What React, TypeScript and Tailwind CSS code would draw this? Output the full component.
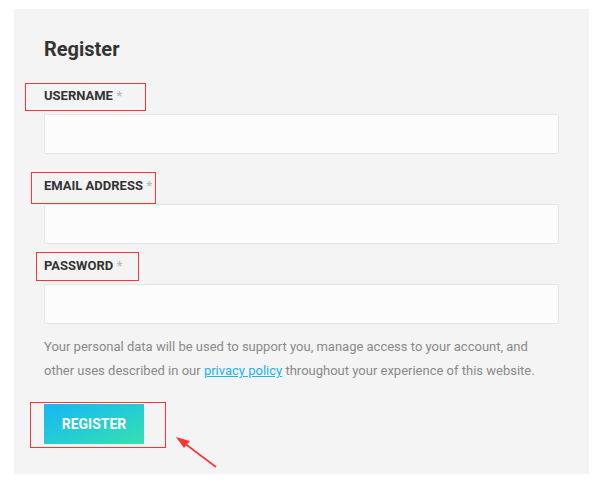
const fields = [
  { label: "Username", mt: "mt-[27px]", type: "text" },
  { label: "Email address", mt: "mt-[24px]", type: "email" },
  { label: "Password", mt: "mt-[14px]", type: "password" },
];

const marks = [
  "left-[25px] top-[83px] w-[121px] h-[28px]",
  "left-[31px] top-[172px] w-[125px] h-[32px]",
  "left-[36px] top-[252px] w-[103px] h-[29px]",
  "left-[30px] top-[402px] w-[136px] h-[46px]",
];

const App = () => {
  return (
    <div className="relative w-[604px] h-[486px] bg-white font-['Roboto',sans-serif]">
      <div className="ml-[14px] pt-[9px] w-[575px]">
        <div className="bg-[#f4f4f4] px-[30px] pt-[28px] pb-[30px]">
          <h2 className="text-[20px] leading-6 font-bold text-[#333]">Register</h2>
          {fields.map((f) => (
            <div key={f.label}>
              <label className={`block ${f.mt} text-[13px] leading-4 font-bold uppercase text-[#333]`}>
                {f.label} <span className="text-[#bbb]">*</span>
              </label>
              <input
                type={f.type}
                className="block mt-[10px] w-full h-[40px] bg-[#fcfcfc] border border-[#e6e6e6] rounded-[2px] outline-none"
              />
            </div>
          ))}
          <p className="mt-[11px] text-[13px] leading-6 text-[#8a8a8a]">
            Your personal data will be used to support you, manage access to your account, and
            other uses described in our{" "}
            <a href="#" className="text-[#1fb3ee] underline">
              privacy policy
            </a>{" "}
            throughout your experience of this website.
          </p>
          <button className="mt-[21px] w-[100px] h-[40px] bg-gradient-to-br from-[#1bb6f5] to-[#37e0ae] text-white text-[14px] font-bold uppercase">
            Register
          </button>
        </div>
      </div>

      {marks.map((m) => (
        <div key={m} className={`absolute ${m} border border-[#ff3333] pointer-events-none`} />
      ))}

      <svg className="absolute left-0 top-0 pointer-events-none" width="604" height="486">
        <line x1="216" y1="467" x2="184" y2="443" stroke="#ff3333" strokeWidth="1.6" />
        <polygon points="176,437 190,441 184,448" fill="#ff3333" />
      </svg>
    </div>
  );
};

export default App;
